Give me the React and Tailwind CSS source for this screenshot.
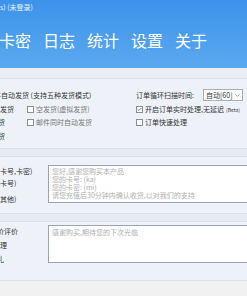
import { Check, ChevronDown } from "lucide-react";

const font = { fontFamily: '"Noto Sans CJK SC", "Noto Sans", sans-serif' };

const Box = ({ checked }) => (
  <span className="flex h-[7px] w-[7px] shrink-0 items-center justify-center border border-[#8a8f97] bg-white">
    {checked && <Check className="h-[7px] w-[7px] text-[#333]" strokeWidth={3} />}
  </span>
);

const navItems = ["卡密", "日志", "统计", "设置", "关于"];

const App = () => {
  return (
    <div
      className="flex h-[296px] w-[247px] flex-col overflow-hidden whitespace-nowrap bg-[#f1f1f1] text-[7px] leading-none text-[#333]"
      style={font}
    >
      <div className="flex h-[68px] shrink-0 flex-col bg-gradient-to-b from-[#3c93ea] to-[#5aa8ef] text-white">
        <div className="mt-[4px] text-[7px] text-[#eaf3ff]">s) (未登录)</div>
        <div className="mt-[21px] ml-[-1px] flex gap-[12px] text-[16px] leading-none">
          {navItems.map((item) => (
            <span key={item}>{item}</span>
          ))}
        </div>
      </div>

      <div className="h-[10px] shrink-0 bg-[#e9edf4]" />

      {/* 发货设置 */}
      <div className="flex h-[70px] shrink-0 border-t border-[#d9e0ea] bg-[#eef2f8] pt-[9px]">
        <div className="flex w-[136px] shrink-0 flex-col">
          <div className="ml-[-6px] flex h-[14px] items-center">件自动发货 (支持五种发货模式)</div>
          <div className="flex h-[14px] items-center">
            <span className="w-[27px]">发货</span>
            <Box />
            <span className="ml-[2px] text-[#777]">空发货(虚拟发货)</span>
          </div>
          <div className="flex h-[13px] items-center">
            <span className="ml-[-2px] w-[29px]">货</span>
            <Box />
            <span className="ml-[2px] text-[#777]">邮件同时自动发货</span>
          </div>
          <div className="ml-[-2px] flex h-[15px] items-center">货</div>
        </div>
        <div className="flex flex-col">
          <div className="flex h-[14px] items-center">
            <span className="w-[67px]">订单循环扫描时间:</span>
            <span className="flex h-[12px] w-[40px] items-center justify-between border border-[#a9afb8] bg-white pl-[2px] pr-[1px]">
              自动[60]
              <ChevronDown className="h-[7px] w-[7px] text-[#666]" />
            </span>
          </div>
          <div className="flex h-[14px] items-center gap-[2px]">
            <Box checked />
            <span>开启订单实时处理,无延迟</span>
            <span className="text-[5px]">(Beta)</span>
          </div>
          <div className="flex h-[13px] items-center gap-[2px]">
            <Box />
            <span>订单快速处理</span>
          </div>
        </div>
      </div>

      <div className="h-[9px] shrink-0 border-y border-[#d9e0ea] bg-[#e6ebf3]" />

      {/* 发货模板 */}
      <div className="flex h-[56px] shrink-0 bg-[#eef2f8] pt-[8px]">
        <div className="flex w-[48px] shrink-0 flex-col">
          <div className="mt-[3px] h-[12px]">卡号,卡密)</div>
          <div className="h-[16px]">卡号)</div>
          <div>其他)</div>
        </div>
        <div className="h-[38px] w-[220px] shrink-0 border border-[#9ea4ad] bg-white px-[3px] pt-[1px] leading-[8px] text-[#b0b0b0]">
          <div>您好,感谢您购买本产品</div>
          <div>您的卡号: {"{ka}"}</div>
          <div>您的卡密: {"{mi}"}</div>
          <div>请您充值后30分钟内确认收货,以对我们的支持</div>
        </div>
      </div>

      <div className="h-[9px] shrink-0 border-y border-[#d9e0ea] bg-[#e6ebf3]" />

      {/* 评价 */}
      <div className="flex h-[59px] shrink-0 border-b border-[#dde3ec] bg-[#eef2f8] pt-[3px]">
        <div className="flex w-[48px] shrink-0 flex-col">
          <div className="ml-[-3px] mt-[3px] h-[14px]">价评价</div>
          <div className="h-[14px]">理</div>
          <div className="ml-[-3px]">礼</div>
        </div>
        <div className="h-[38px] w-[220px] shrink-0 border border-[#9ea4ad] bg-white px-[3px] pt-[3px] text-[#b0b0b0]">
          感谢购买,期待您的下次光临
        </div>
      </div>
    </div>
  );
};

export default App;
